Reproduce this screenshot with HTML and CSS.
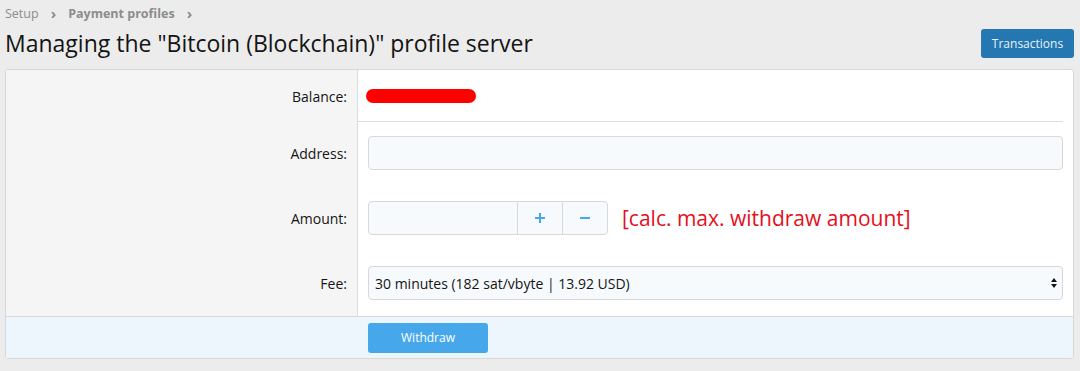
FILE: index.html
```html
<!DOCTYPE html>
<html>
<head>
<meta charset="utf-8">
<link rel="stylesheet" href="styles.css">
</head>
<body>
<div class="page">
  <nav class="crumbs">
    <span class="crumb">Setup</span>
    <span class="sep">›</span>
    <span class="crumb strong">Payment profiles</span>
    <span class="sep">›</span>
  </nav>
  <div class="header">
    <h1 class="title">Managing the "Bitcoin (Blockchain)" profile server</h1>
    <button class="btn-primary">Transactions</button>
  </div>
  <div class="block">
    <div class="row row-balance">
      <div class="label">Balance:</div>
      <div class="value value-flush"><div class="value-inner sep-bottom"><span class="redact"></span></div></div>
    </div>
    <div class="row row-field">
      <div class="label">Address:</div>
      <div class="value"><div class="input"></div></div>
    </div>
    <div class="row row-field">
      <div class="label">Amount:</div>
      <div class="value amount">
        <div class="input-group">
          <div class="ig-text"></div>
          <div class="ig-btn">
            <svg width="12" height="12" viewBox="0 0 12 12"><path d="M6 1v10M1 6h10" stroke="#47a7eb" stroke-width="2"/></svg>
          </div>
          <div class="ig-btn">
            <svg width="12" height="12" viewBox="0 0 12 12"><path d="M1 6h10" stroke="#47a7eb" stroke-width="2"/></svg>
          </div>
        </div>
        <span class="calc">[calc. max. withdraw amount]</span>
      </div>
    </div>
    <div class="row row-field row-last">
      <div class="label">Fee:</div>
      <div class="value">
        <div class="input select">
          <span>30 minutes (182 sat/vbyte | 13.92 USD)</span>
          <svg class="arrows" width="8" height="12" viewBox="0 0 8 12"><path d="M4 1L7 5H1Z M4 11L7 7H1Z" fill="#141414"/></svg>
        </div>
      </div>
    </div>
    <div class="footer">
      <div class="footer-left"></div>
      <div class="footer-right"><button class="btn-submit">Withdraw</button></div>
    </div>
  </div>
</div>
</body>
</html>
```
FILE: styles.css
```css
* { box-sizing: border-box; }
html, body { margin: 0; padding: 0; }
body {
  background: #ececec;
  font-family: "Open Sans", "Noto Sans", sans-serif;
  color: #141414;
}
.page { padding: 5px 6px 0 5px; }
.crumbs {
  display: flex;
  align-items: center;
  gap: 12px;
  font-size: 12.5px;
  color: #8c8c8c;
  height: 17px;
}
.crumb.strong { font-weight: 700; color: #8c8c8c; }
.sep { font-size: 15px; margin-top: -2px; font-weight: 700; }
.header {
  display: flex;
  justify-content: space-between;
  align-items: center;
  margin-top: 7px;
  height: 28px;
}
.title {
  margin: 0;
  font-weight: 400;
  font-size: 23px;
  color: #141414;
  line-height: 28px;
}
.btn-primary {
  background: #2577b1;
  color: #e6f2fb;
  border: none;
  border-radius: 3px;
  font-family: inherit;
  font-size: 12px;
  height: 29px;
  width: 93px;
  padding: 0;
}
.block {
  margin-top: 12px;
  background: #fff;
  border: 1px solid #d8d8d8;
  border-radius: 3px;
  overflow: hidden;
}
.row {
  display: grid;
  grid-template-columns: 352px 1fr;
  height: 65px;
}
.row-last { height: 64px; }
.row-balance { height: 52px; }
.label {
  background: #f5f5f5;
  border-right: 1px solid #dcdcdc;
  display: flex;
  align-items: center;
  justify-content: flex-end;
  padding-right: 10px;
  font-size: 14px;
}
.row-field .label { align-items: flex-start; padding-top: 22px; }
.row-balance .label { padding-top: 1px; }
.value {
  display: flex;
  align-items: center;
  padding: 0 10px;
}
.row-field .value { align-items: flex-start; padding-top: 14px; }
.value-flush { padding-left: 0; }
.value-inner { width: 100%; height: 100%; display: flex; align-items: center; padding-left: 8px; }
.sep-bottom { border-bottom: 1px solid #dcdcdc; }
.redact {
  display: block;
  width: 110px;
  height: 14px;
  background: #ff0000;
  border-radius: 7px;
}
.input {
  width: 100%;
  height: 34px;
  background: #f7fafd;
  border: 1px solid #d8d8d8;
  border-radius: 4px;
}
.amount { gap: 14px; }
.input-group {
  display: flex;
  height: 34px;
  width: 240px;
  border: 1px solid #d8d8d8;
  border-radius: 4px;
  background: #f7fafd;
}
.ig-text { flex: 1; }
.ig-btn {
  width: 45px;
  border-left: 1px solid #d8d8d8;
  display: flex;
  align-items: center;
  justify-content: center;
}
.calc {
  color: #e3101c;
  font-size: 21px;
  line-height: 34px;
  font-family: "Open Sans", sans-serif;
}
.select {
  display: flex;
  align-items: center;
  justify-content: space-between;
  padding: 0 4px 0 6px;
  font-size: 14px;
}
.footer {
  display: grid;
  grid-template-columns: 352px 1fr;
  height: 42px;
  background: #edf6fd;
  border-top: 1px solid #d8d8d8;
}
.footer-right { display: flex; align-items: center; padding-left: 10px; }
.btn-submit {
  width: 120px;
  height: 30px;
  background: #47a7eb;
  color: #fff;
  border: none;
  border-radius: 3px;
  font-family: inherit;
  font-size: 12px;
}
```
